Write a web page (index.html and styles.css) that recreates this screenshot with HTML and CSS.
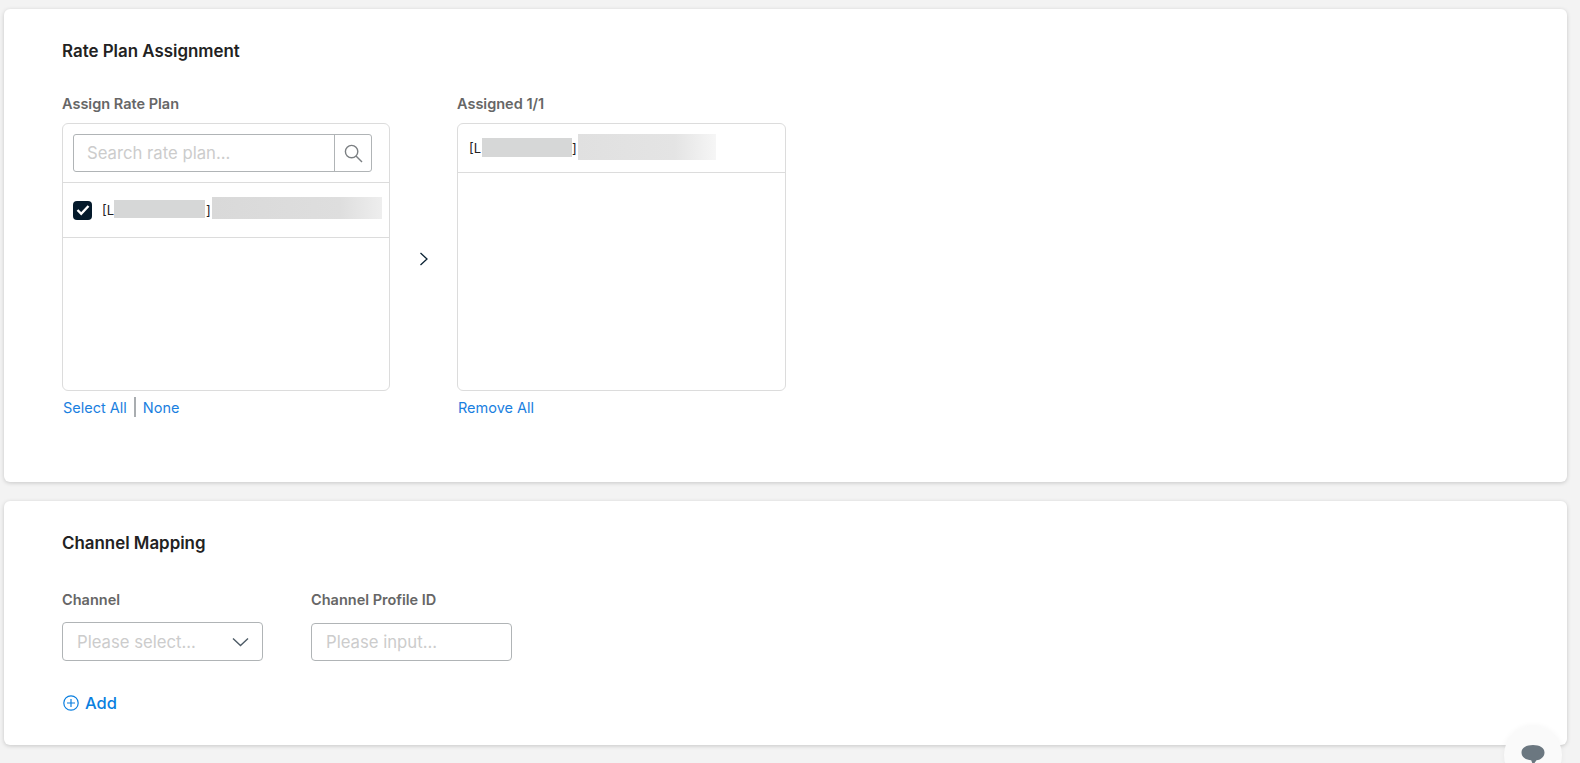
FILE: index.html
```html
<!DOCTYPE html>
<html lang="en">
<head>
<meta charset="utf-8">
<title>Rate Plan Assignment</title>
<link rel="stylesheet" href="styles.css">
</head>
<body>
<main class="page">
  <section class="card card-rate">
    <h2 class="card-title">Rate Plan Assignment</h2>
    <div class="transfer">
      <div class="column">
        <div class="field-label">Assign Rate Plan</div>
        <div class="panel">
          <div class="search-row">
            <div class="search">
              <span class="search-input">Search rate plan...</span>
              <span class="search-btn">
                <svg width="19" height="19" viewBox="0 0 19 19" fill="none" stroke="#7b7f82" stroke-width="1.4"><circle cx="7.600" cy="7.600" r="6.200"/><path d="M12 12 18 18"/></svg>
              </span>
            </div>
          </div>
          <div class="source-row">
            <span class="checkbox">
              <svg width="14" height="12" viewBox="0 0 14 12" fill="none" stroke="#fff" stroke-width="2.400"><path d="M1.500 6 5.200 9.800 12.500 2"/></svg>
            </span>
            <span class="plan-text">[L</span>
            <span class="plan-bracket">]</span>
            <span class="blur blur-a"></span>
            <span class="blur blur-b"></span>
          </div>
        </div>
        <div class="links">
          <span class="link">Select All</span>
          <span class="link-sep"></span>
          <span class="link">None</span>
        </div>
      </div>
      <div class="arrow">
        <svg width="10" height="14" viewBox="0 0 10 14" fill="none" stroke="#0a2233" stroke-width="1.3"><path d="M1.500 1 8 7l-6.500 6"/></svg>
      </div>
      <div class="column">
        <div class="field-label">Assigned 1/1</div>
        <div class="panel">
          <div class="assigned-row">
            <span class="plan-text">[L</span>
            <span class="plan-bracket">]</span>
            <span class="blur blur-c"></span>
            <span class="blur blur-d"></span>
          </div>
        </div>
        <div class="links">
          <span class="link">Remove All</span>
        </div>
      </div>
    </div>
  </section>

  <section class="card card-channel">
    <h2 class="card-title">Channel Mapping</h2>
    <div class="mapping">
      <div class="map-field">
        <div class="field-label">Channel</div>
        <div class="control control-select">
          <span class="placeholder">Please select...</span>
          <svg width="17" height="10" viewBox="0 0 17 10" fill="none" stroke="#4d5b66" stroke-width="1.4"><path d="M1 1.500 8.500 8.500 16 1.500"/></svg>
        </div>
      </div>
      <div class="map-field">
        <div class="field-label">Channel Profile ID</div>
        <div class="control control-input">
          <span class="placeholder">Please input...</span>
        </div>
      </div>
    </div>
    <div class="add">
      <svg width="16" height="16" viewBox="0 0 16 16" fill="none" stroke="#0a7fe0" stroke-width="1.200"><circle cx="8" cy="8" r="7.200"/><path d="M8 4v8M4 8h8"/></svg>
      <span>Add</span>
    </div>
  </section>
</main>
<div class="chat-bubble">
  <svg width="26" height="24" viewBox="0 0 26 24"><path fill="#6b7780" d="M13 1c6.500 0 11.500 2.700 11.500 7.500S20 16 16.500 16.300L13 21l-1.800-4.800C6 16 1.500 13.300 1.500 8.500S6.500 1 13 1z"/></svg>
</div>
</body>
</html>
```
FILE: styles.css
```css
* { box-sizing: border-box; }
html, body { height: 100%; }
body {
  margin: 0;
  background: #f3f3f3;
  font-family: Inter, "Liberation Sans", sans-serif;
  color: #1f1f1f;
  overflow: hidden;
}
.page {
  display: flex;
  flex-direction: column;
  gap: 19px;
  padding: 9px 13px 0 4px;
}
.card {
  background: #fff;
  border-radius: 6px;
  box-shadow: 0 1px 4px rgba(0, 0, 0, 0.18);
  padding: 32px 58px 0;
}
.card-rate { height: 473px; }
.card-channel { height: 244px; }
.card-title {
  margin: 0;
  font-size: 16.9px;
  line-height: 20px;
  font-weight: 600;
  color: #222;
}
.field-label {
  font-size: 14.5px;
  line-height: 16px;
  font-weight: 600;
  color: #666;
}
.transfer {
  display: flex;
  align-items: flex-start;
  margin-top: 35px;
}
.column { width: 328px; }
.column:last-child { width: 329px; }
.panel {
  margin-top: 11px;
  height: 268px;
  border: 1px solid #dcdcdc;
  border-radius: 6px;
  background: #fff;
}
.search-row {
  height: 59px;
  padding: 10px;
  border-bottom: 1px solid #dcdcdc;
}
.search {
  display: flex;
  width: 299px;
  height: 38px;
  border: 1px solid #b0b4b6;
  border-radius: 3px;
}
.search-input {
  flex: 1;
  padding-left: 13px;
  font-size: 16.7px;
  line-height: 36px;
  color: #cccccc;
}
.search-btn {
  display: flex;
  align-items: center;
  justify-content: center;
  width: 37px;
  border-left: 1px solid #b0b4b6;
}
.source-row, .assigned-row {
  position: relative;
  display: flex;
  align-items: center;
  border-bottom: 1px solid #dcdcdc;
  font-size: 13px;
  color: #222;
}
.source-row { height: 55px; padding-left: 10px; }
.assigned-row { height: 49px; padding-left: 11px; }
.checkbox {
  display: flex;
  align-items: center;
  justify-content: center;
  width: 19px;
  height: 19px;
  margin-right: 10px;
  border-radius: 4px;
  background: #041a2b;
}
.plan-bracket { margin-left: 91px; }
.source-row .plan-bracket { margin-left: 92px; }
.blur { position: absolute; }
.blur-a { left: 51px; top: 17px; width: 91px; height: 18px; background: #d6d7d7; }
.blur-b { left: 149px; top: 14px; width: 170px; height: 22px; background: linear-gradient(90deg, #d9d9d9 0%, #dedede 75%, #eeeeee 100%); }
.blur-c { left: 24px; top: 14px; width: 90px; height: 19px; background: #d6d7d7; }
.blur-d { left: 120px; top: 10px; width: 138px; height: 26px; background: linear-gradient(90deg, #e0e0e0 0%, #e4e4e4 70%, #f6f6f6 100%); }
.links {
  display: flex;
  align-items: center;
  gap: 7px;
  height: 20px;
  margin-top: 6px;
  padding-left: 1px;
  font-size: 14.5px;
  color: #1a80e0;
}
.link-sep { width: 2px; height: 20px; background: #a9adb0; }
.arrow {
  display: flex;
  justify-content: center;
  width: 67px;
  margin-top: 156px;
}
.mapping {
  display: flex;
  gap: 48px;
  margin-top: 39px;
}
.map-field { width: 201px; }
.control {
  display: flex;
  align-items: center;
  justify-content: space-between;
  border: 1px solid #b0b4b6;
  border-radius: 4px;
  padding: 0 13px 0 14px;
  font-size: 16.7px;
  color: #cccccc;
}
.control-select { height: 39px; margin-top: 14px; }
.control-input { height: 38px; margin-top: 15px; }
.add {
  display: flex;
  align-items: center;
  gap: 6px;
  margin-top: 32px;
  padding-left: 1px;
  font-size: 16.5px;
  font-weight: 500;
  color: #0a7fe0;
}
.chat-bubble {
  position: fixed;
  left: 1504px;
  top: 726px;
  width: 58px;
  height: 58px;
  display: flex;
  justify-content: center;
  padding-top: 18px;
  border-radius: 50%;
  background: #fafafa;
  box-shadow: 0 0 6px rgba(0, 0, 0, 0.05);
}
```
